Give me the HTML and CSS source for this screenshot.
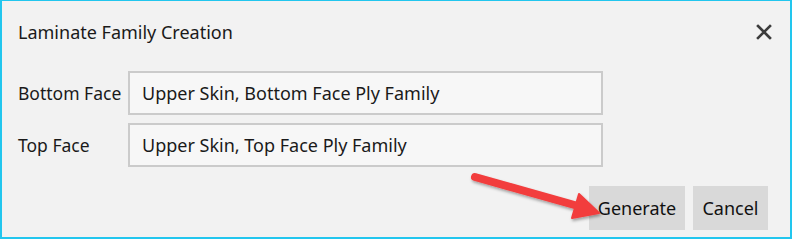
FILE: index.html
```html
<!DOCTYPE html>
<html>
<head>
<meta charset="utf-8">
<link rel="stylesheet" href="styles.css">
</head>
<body>
<div class="window">
  <div class="header">
    <div class="title">Laminate Family Creation</div>
    <svg class="close" width="16" height="16" viewBox="0 0 16 16"><path d="M2 2 L14 14 M14 2 L2 14" stroke="#3c3c3c" stroke-width="2.6" stroke-linecap="square"/></svg>
  </div>
  <div class="form">
    <div class="row">
      <div class="label">Bottom Face</div>
      <div class="field">Upper Skin, Bottom Face Ply Family</div>
    </div>
    <div class="row">
      <div class="label">Top Face</div>
      <div class="field">Upper Skin, Top Face Ply Family</div>
    </div>
  </div>
  <div class="actions">
    <div class="btn btn-generate">Generate</div>
    <div class="btn btn-cancel">Cancel</div>
  </div>
  <svg class="arrow" width="150" height="70" viewBox="0 0 150 70">
    <defs>
      <filter id="sh" x="-20%" y="-20%" width="140%" height="160%">
        <feDropShadow dx="1" dy="2" stdDeviation="1.5" flood-color="#000" flood-opacity="0.35"/>
      </filter>
    </defs>
    <g filter="url(#sh)">
      <path d="M11 15 L114 44" stroke="#f23d3d" stroke-width="8" stroke-linecap="round"/>
      <path d="M115 32 L135 51 L108 56 Z" fill="#f23d3d" stroke="#f23d3d" stroke-width="2" stroke-linejoin="round"/>
    </g>
  </svg>
</div>
</body>
</html>
```
FILE: styles.css
```css
html, body {
  margin: 0;
  padding: 0;
  background: #ffffff;
}
body {
  width: 794px;
  height: 240px;
  font-family: "Noto Sans", "Open Sans", sans-serif;
  color: #1a1a1a;
}
.window {
  position: relative;
  box-sizing: border-box;
  width: 792px;
  height: 239px;
  background: #f2f2f2;
  border: 2px solid #22c6ee;
  border-top-width: 1px;
  display: flex;
  flex-direction: column;
}
.header {
  display: flex;
  align-items: center;
  justify-content: space-between;
  height: 60px;
  padding: 0 18px 0 16px;
}
.title {
  font-size: 18px;
  margin-top: 2px;
}
.close {
  margin-top: 2px;
}
.form {
  display: flex;
  flex-direction: column;
  gap: 8px;
  padding-left: 16px;
  margin-top: 10px;
}
.row {
  display: flex;
  align-items: center;
}
.label {
  width: 110px;
  font-size: 17.5px;
}
.field {
  box-sizing: border-box;
  width: 475px;
  height: 44px;
  border: 2px solid #cbcbcb;
  background: #f7f7f7;
  padding-left: 12px;
  display: flex;
  align-items: center;
  font-size: 18px;
}
.actions {
  display: flex;
  justify-content: flex-end;
  gap: 8px;
  padding-right: 22px;
  margin-top: 19px;
}
.btn {
  box-sizing: border-box;
  height: 44px;
  background: #d9d9d9;
  display: flex;
  align-items: center;
  justify-content: center;
  font-size: 18px;
  color: #111;
}
.btn-generate { width: 96px; }
.btn-cancel { width: 75px; }
.arrow {
  position: absolute;
  left: 462px;
  top: 161px;
}
```
